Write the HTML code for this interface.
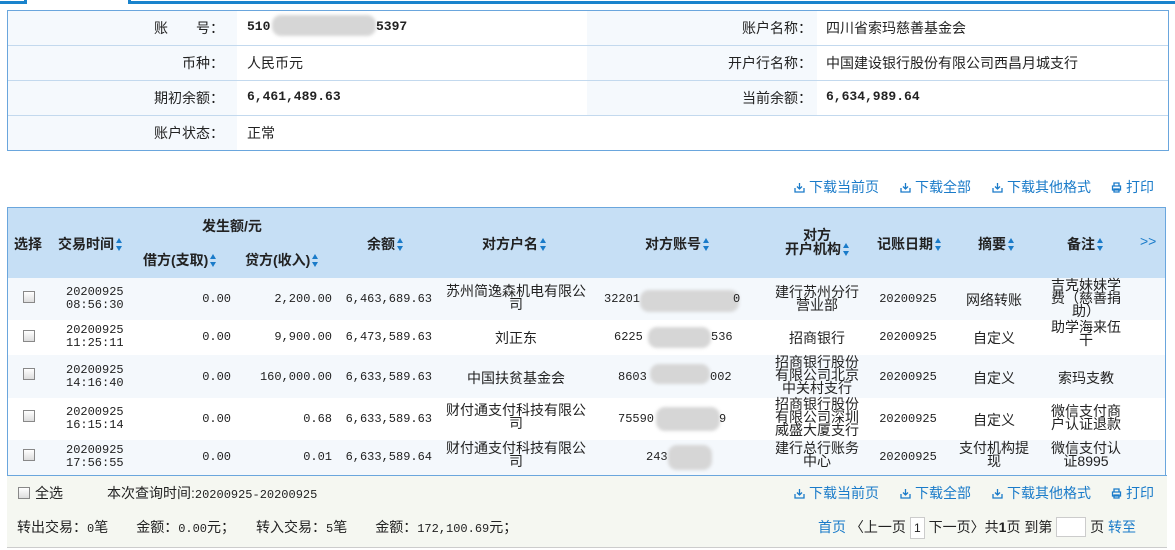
<!DOCTYPE html>
<html><head><meta charset="utf-8"><style>
*{margin:0;padding:0;box-sizing:border-box}
body{width:1175px;height:550px;background:#fff;font-family:"Liberation Sans","Noto Sans CJK SC",sans-serif;font-size:14px;color:#222;position:relative;overflow:hidden}
.a{position:absolute;white-space:nowrap}
.c{text-align:center}.r{text-align:right}
.lnk{color:#1a7bc9}
.b{font-weight:bold}
.mono{font-family:"Liberation Mono","Noto Sans CJK SC",monospace;font-size:12px}
.big{font-size:13px}
.cb{position:absolute;width:12px;height:12px;border:1px solid #888;background:linear-gradient(#fff,#ddd)}
.blur{position:absolute;background:#d6d6d6;border-radius:9px;filter:blur(1.5px)}
.ar{display:inline-block;width:6px;height:13px;vertical-align:-2px;margin-left:2px;position:relative}
.ar:before{content:"";position:absolute;left:0;top:0;border-left:3px solid transparent;border-right:3px solid transparent;border-bottom:5px solid #1a7bc9}
.ar:after{content:"";position:absolute;left:0;bottom:0;border-left:3px solid transparent;border-right:3px solid transparent;border-top:5px solid #1a7bc9}
.ic{display:inline-block;width:11px;height:11px;vertical-align:-1px;margin-right:4px}
.ml{line-height:13px;white-space:normal}
</style></head><body>
<div class="a" style="left:0;top:0;width:27px;height:4px;border-bottom:3px solid #1a83cc;border-right:3px solid #1a83cc"></div>
<div class="a" style="left:128px;top:0;width:1047px;height:4px;border-left:3px solid #1a83cc;border-bottom:3px solid #1a83cc"></div>
<div class="a" style="left:7px;top:10px;width:1162px;height:141px;border:1px solid #6aa6dd"></div>
<div class="a" style="left:8px;top:11px;width:229px;height:139px;background:#f5f9fd"></div>
<div class="a" style="left:587px;top:11px;width:230px;height:105px;background:#f5f9fd"></div>
<div class="a" style="left:8px;top:45px;width:1160px;height:1px;background:#c3d9ee"></div>
<div class="a" style="left:8px;top:80px;width:1160px;height:1px;background:#c3d9ee"></div>
<div class="a" style="left:8px;top:115px;width:1160px;height:1px;background:#c3d9ee"></div>
<div class="a r" style="left:100px;width:124px;top:18px">账　　号：</div>
<div class="a r" style="left:100px;width:124px;top:53px">币种：</div>
<div class="a r" style="left:100px;width:124px;top:88px">期初余额：</div>
<div class="a r" style="left:100px;width:124px;top:123px">账户状态：</div>
<div class="a b mono big" style="left:247px;top:19px">510</div>
<div class="blur" style="left:272px;top:15px;width:104px;height:21px"></div>
<div class="a b mono big" style="left:376px;top:19px">5397</div>
<div class="a" style="left:247px;top:53px">人民币元</div>
<div class="a b mono big" style="left:247px;top:89px">6,461,489.63</div>
<div class="a" style="left:247px;top:123px">正常</div>
<div class="a r" style="left:680px;width:132px;top:18px">账户名称：</div>
<div class="a r" style="left:680px;width:132px;top:53px">开户行名称：</div>
<div class="a r" style="left:680px;width:132px;top:88px">当前余额：</div>
<div class="a" style="left:826px;top:18px">四川省索玛慈善基金会</div>
<div class="a" style="left:826px;top:53px">中国建设银行股份有限公司西昌月城支行</div>
<div class="a b mono big" style="left:826px;top:89px">6,634,989.64</div>
<div class="a lnk" style="left:794px;top:177px"><svg class="ic" viewBox="0 0 11 11"><path d="M5.5 1v6M3 4.5l2.5 2.5 2.5-2.5M1 6v4h9V6" fill="none" stroke="#1a7bc9" stroke-width="1.3"/></svg>下载当前页</div>
<div class="a lnk" style="left:900px;top:177px"><svg class="ic" viewBox="0 0 11 11"><path d="M5.5 1v6M3 4.5l2.5 2.5 2.5-2.5M1 6v4h9V6" fill="none" stroke="#1a7bc9" stroke-width="1.3"/></svg>下载全部</div>
<div class="a lnk" style="left:992px;top:177px"><svg class="ic" viewBox="0 0 11 11"><path d="M5.5 1v6M3 4.5l2.5 2.5 2.5-2.5M1 6v4h9V6" fill="none" stroke="#1a7bc9" stroke-width="1.3"/></svg>下载其他格式</div>
<div class="a lnk" style="left:1111px;top:177px"><svg class="ic" viewBox="0 0 11 11"><path d="M3 4V1h5v3M1.5 4h8v4h-8zM3 7h5v3H3z" fill="none" stroke="#1a7bc9" stroke-width="1.3"/></svg>打印</div>
<div class="a" style="left:7px;top:207px;width:1159px;height:269px;border:1px solid #6aa6dd;border-bottom:none"></div>
<div class="a" style="left:8px;top:208px;width:1157px;height:70px;background:#c6dff5"></div>
<div class="a" style="left:8px;top:278px;width:1157px;height:42px;background:#f4f8fc"></div>
<div class="a" style="left:8px;top:355px;width:1157px;height:43px;background:#f4f8fc"></div>
<div class="a" style="left:8px;top:440px;width:1157px;height:35px;background:#f4f8fc"></div>
<div class="a" style="left:7px;top:475px;width:1160px;height:73px;background:#f5f7f1;border-bottom:1px solid #ccc;border-top:1px solid #6aa6dd"></div>
<div class="a b" style="left:14px;top:234px">选择</div>
<div class="a b" style="left:58px;top:234px">交易时间<span class="ar"></span></div>
<div class="a b" style="left:202px;top:216px">发生额/元</div>
<div class="a b" style="left:143px;top:250px">借方(支取)<span class="ar"></span></div>
<div class="a b" style="left:245px;top:250px">贷方(收入)<span class="ar"></span></div>
<div class="a b" style="left:367px;top:234px">余额<span class="ar"></span></div>
<div class="a b" style="left:482px;top:234px">对方户名<span class="ar"></span></div>
<div class="a b" style="left:645px;top:234px">对方账号<span class="ar"></span></div>
<div class="a b c" style="left:770px;width:94px;top:228px;line-height:14px">对方<br>开户机构<span class="ar"></span></div>
<div class="a b" style="left:877px;top:234px">记账日期<span class="ar"></span></div>
<div class="a b" style="left:978px;top:234px">摘要<span class="ar"></span></div>
<div class="a b" style="left:1067px;top:234px">备注<span class="ar"></span></div>
<div class="a lnk" style="left:1140px;top:233px">&gt;&gt;</div>

<div class="cb" style="left:23px;top:291px"></div>
<div class="cb" style="left:23px;top:330px"></div>
<div class="cb" style="left:23px;top:368px"></div>
<div class="cb" style="left:23px;top:410px"></div>
<div class="cb" style="left:23px;top:449px"></div>
<div class="a mono" style="left:66px;top:286px;line-height:13px">20200925<br>08:56:30</div>
<div class="a mono" style="left:66px;top:324px;line-height:13px">20200925<br>11:25:11</div>
<div class="a mono" style="left:66px;top:364px;line-height:13px">20200925<br>14:16:40</div>
<div class="a mono" style="left:66px;top:406px;line-height:13px">20200925<br>16:15:14</div>
<div class="a mono" style="left:66px;top:444px;line-height:13px">20200925<br>17:56:55</div>
<div class="a mono r" style="left:150px;width:81px;top:292px">0.00</div>
<div class="a mono r" style="left:150px;width:81px;top:330px">0.00</div>
<div class="a mono r" style="left:150px;width:81px;top:370px">0.00</div>
<div class="a mono r" style="left:150px;width:81px;top:412px">0.00</div>
<div class="a mono r" style="left:150px;width:81px;top:450px">0.00</div>
<div class="a mono r" style="left:232px;width:100px;top:292px">2,200.00</div>
<div class="a mono r" style="left:232px;width:100px;top:330px">9,900.00</div>
<div class="a mono r" style="left:232px;width:100px;top:370px">160,000.00</div>
<div class="a mono r" style="left:232px;width:100px;top:412px">0.68</div>
<div class="a mono r" style="left:232px;width:100px;top:450px">0.01</div>
<div class="a mono r" style="left:332px;width:100px;top:292px">6,463,689.63</div>
<div class="a mono r" style="left:332px;width:100px;top:330px">6,473,589.63</div>
<div class="a mono r" style="left:332px;width:100px;top:370px">6,633,589.63</div>
<div class="a mono r" style="left:332px;width:100px;top:412px">6,633,589.63</div>
<div class="a mono r" style="left:332px;width:100px;top:450px">6,633,589.64</div>
<div class="a c ml" style="left:444px;width:144px;top:285px">苏州简逸森机电有限公司</div>
<div class="a c" style="left:440px;width:152px;top:328px">刘正东</div>
<div class="a c" style="left:440px;width:152px;top:368px">中国扶贫基金会</div>
<div class="a c ml" style="left:444px;width:144px;top:404px">财付通支付科技有限公司</div>
<div class="a c ml" style="left:444px;width:144px;top:442px">财付通支付科技有限公司</div>
<div class="a mono" style="left:604px;top:292px">32201</div><div class="blur" style="left:640px;top:290px;width:99px;height:22px"></div><div class="a mono" style="left:733px;top:292px">0</div>
<div class="a mono" style="left:614px;top:330px">6225</div><div class="blur" style="left:648px;top:327px;width:63px;height:21px"></div><div class="a mono" style="left:711px;top:330px">536</div>
<div class="a mono" style="left:618px;top:370px">8603</div><div class="blur" style="left:650px;top:364px;width:60px;height:20px"></div><div class="a mono" style="left:710px;top:370px">002</div>
<div class="a mono" style="left:618px;top:412px">75590</div><div class="blur" style="left:656px;top:407px;width:64px;height:24px"></div><div class="a mono" style="left:719px;top:412px">9</div>
<div class="a mono" style="left:646px;top:450px">243</div><div class="blur" style="left:668px;top:445px;width:44px;height:25px"></div>
<div class="a c ml" style="left:774px;width:86px;top:286px">建行苏州分行营业部</div>
<div class="a c" style="left:770px;width:94px;top:328px">招商银行</div>
<div class="a c ml" style="left:774px;width:86px;top:356px">招商银行股份有限公司北京中关村支行</div>
<div class="a c ml" style="left:774px;width:86px;top:398px">招商银行股份有限公司深圳威盛大厦支行</div>
<div class="a c ml" style="left:774px;width:86px;top:442px">建行总行账务中心</div>
<div class="a mono c" style="left:868px;width:80px;top:292px">20200925</div>
<div class="a mono c" style="left:868px;width:80px;top:330px">20200925</div>
<div class="a mono c" style="left:868px;width:80px;top:370px">20200925</div>
<div class="a mono c" style="left:868px;width:80px;top:412px">20200925</div>
<div class="a mono c" style="left:868px;width:80px;top:450px">20200925</div>
<div class="a c" style="left:955px;width:78px;top:290px">网络转账</div>
<div class="a c" style="left:955px;width:78px;top:328px">自定义</div>
<div class="a c" style="left:955px;width:78px;top:368px">自定义</div>
<div class="a c" style="left:955px;width:78px;top:410px">自定义</div>
<div class="a c ml" style="left:958px;width:72px;top:442px">支付机构提现</div>
<div class="a c ml" style="left:1050px;width:72px;top:279px">吉克妹妹学费（慈善捐助）</div>
<div class="a c ml" style="left:1050px;width:72px;top:321px">助学海来伍干</div>
<div class="a c" style="left:1040px;width:92px;top:368px">索玛支教</div>
<div class="a c ml" style="left:1050px;width:72px;top:405px">微信支付商户认证退款</div>
<div class="a c ml" style="left:1050px;width:72px;top:442px">微信支付认证8995</div>
<div class="cb" style="left:18px;top:487px"></div>
<div class="a" style="left:35px;top:483px">全选</div>
<div class="a" style="left:107px;top:483px">本次查询时间:<span class="mono">20200925-20200925</span></div>
<div class="a lnk" style="left:794px;top:483px"><svg class="ic" viewBox="0 0 11 11"><path d="M5.5 1v6M3 4.5l2.5 2.5 2.5-2.5M1 6v4h9V6" fill="none" stroke="#1a7bc9" stroke-width="1.3"/></svg>下载当前页</div>
<div class="a lnk" style="left:900px;top:483px"><svg class="ic" viewBox="0 0 11 11"><path d="M5.5 1v6M3 4.5l2.5 2.5 2.5-2.5M1 6v4h9V6" fill="none" stroke="#1a7bc9" stroke-width="1.3"/></svg>下载全部</div>
<div class="a lnk" style="left:992px;top:483px"><svg class="ic" viewBox="0 0 11 11"><path d="M5.5 1v6M3 4.5l2.5 2.5 2.5-2.5M1 6v4h9V6" fill="none" stroke="#1a7bc9" stroke-width="1.3"/></svg>下载其他格式</div>
<div class="a lnk" style="left:1111px;top:483px"><svg class="ic" viewBox="0 0 11 11"><path d="M3 4V1h5v3M1.5 4h8v4h-8zM3 7h5v3H3z" fill="none" stroke="#1a7bc9" stroke-width="1.3"/></svg>打印</div>
<div class="a" style="left:17px;top:517px">转出交易：<span class="mono">0</span>笔　　金额：<span class="mono">0.00</span>元；　　转入交易：<span class="mono">5</span>笔　　金额：<span class="mono">172,100.69</span>元；</div>
<div class="a" style="left:818px;top:517px"><span class="lnk">首页</span> 〈上一页 <span style="display:inline-block;border:1px solid #ccc;background:#fff;width:15px;height:22px;text-align:center;line-height:20px;font-size:12px">1</span> 下一页〉共<b>1</b>页 到第 <span style="display:inline-block;border:1px solid #ccc;background:#fff;width:30px;height:20px;vertical-align:-5px"></span> 页 <span class="lnk">转至</span></div>
</body></html>
